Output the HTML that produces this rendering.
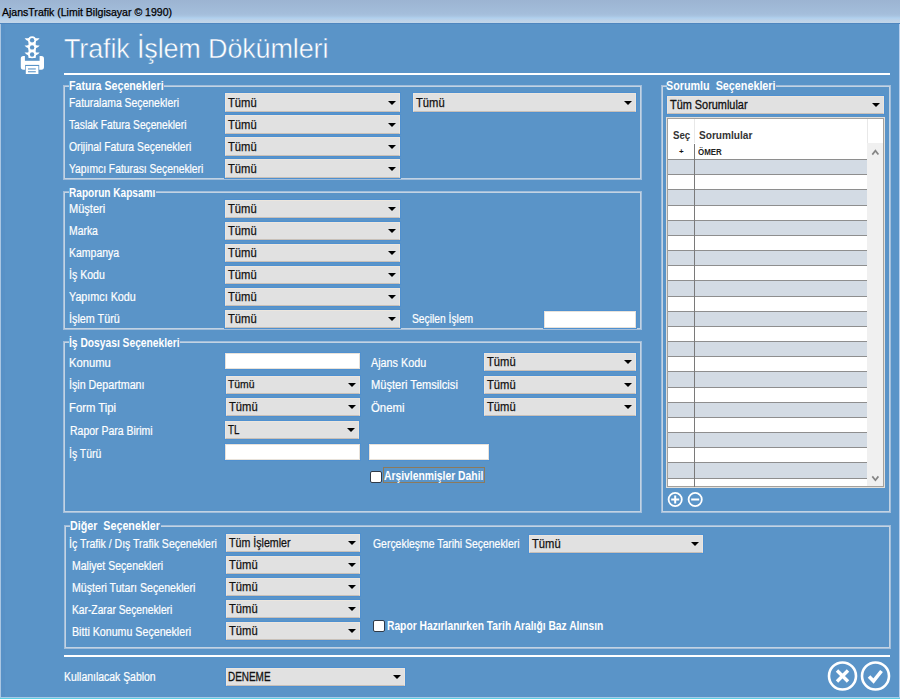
<!DOCTYPE html>
<html><head><meta charset="utf-8"><style>
html,body{margin:0;padding:0;}
body{width:900px;height:699px;position:relative;overflow:hidden;background:#5a94c8;font-family:"Liberation Sans",sans-serif;}
body>div,body>span{position:absolute;}
.t{white-space:nowrap;transform-origin:0 0;line-height:1;}
.gb{border:1px solid #a2bedb;box-shadow:inset 0 0 0 1px #c3d3e3;}
.dd{background:#e1e1e1;border:1px solid #ece6de;border-bottom-color:#c8c0b8;box-shadow:0 0 0 1px #4f90d0;}
.in{background:#fff;border:1px solid #e8e2da;box-shadow:0 0 0 1px #4f90d0;}
.cb{background:#fff;border:1px solid #2f3a48;border-radius:2px;}
.ar{width:0;height:0;border-left:4px solid transparent;border-right:4px solid transparent;border-top:4.5px solid #000;}
</style></head><body>
<div style="left:0;top:0;width:900px;height:23px;background:linear-gradient(#9cb4d2 0px,#a4bedb 14px,#a9c4e0 16px,#b0d0ee 18px,#bcd2e8 20px,#c3d6e9 23px)"></div>
<div style="left:0;top:23px;width:900px;height:1px;background:#4f86bf"></div>
<span class="t" style="left:2px;top:7.49px;font-size:11px;font-weight:400;color:#000;transform:scaleX(0.957);-webkit-text-stroke:0.25px #000;">AjansTrafik (Limit Bilgisayar © 1990)</span>
<div style="left:0;top:24px;width:1px;height:675px;background:#aac6e2"></div>
<div style="left:1px;top:24px;width:4px;height:675px;background:#5891c6"></div>
<div style="left:899px;top:24px;width:1px;height:675px;background:#b8d0ee"></div>
<div style="left:0;top:697px;width:900px;height:1px;background:#a8cce8"></div>
<div style="left:0;top:698px;width:900px;height:1px;background:#5fd0e4"></div>
<svg style="position:absolute;left:0;top:0" width="60" height="80" viewBox="0 0 60 80">
<g fill="#fff">
<rect x="20.8" y="56.1" width="23.2" height="13.6" rx="2.6"/>
</g>
<rect x="24.9" y="56" width="14.7" height="4.8" fill="#5a94c8"/>
<g fill="#fff">
<circle cx="32.1" cy="40.2" r="3.9"/><circle cx="32.1" cy="47.4" r="3.9"/><circle cx="32.1" cy="54.3" r="3.9"/>
<rect x="28.5" y="39" width="7.2" height="19"/>
<path d="M29 37.9 Q26.5 38.6 24.6 38.0 Q25.6 40.6 29 41.4 Z"/><path d="M35.2 37.9 Q37.7 38.6 39.6 38.0 Q38.6 40.6 35.2 41.4 Z"/><path d="M29 45.1 Q26.5 45.8 24.6 45.2 Q25.6 47.8 29 48.6 Z"/><path d="M35.2 45.1 Q37.7 45.8 39.6 45.2 Q38.6 47.8 35.2 48.6 Z"/><path d="M29 52.2 Q26.5 52.9 24.6 52.3 Q25.6 54.9 29 55.7 Z"/><path d="M35.2 52.2 Q37.7 52.9 39.6 52.3 Q38.6 54.9 35.2 55.7 Z"/>
</g>
<g fill="#5a94c8"><circle cx="32.1" cy="40.2" r="2.2"/><circle cx="32.1" cy="47.4" r="2.2"/><circle cx="32.1" cy="54.5" r="2.2"/>
<rect x="25.1" y="64.9" width="14.1" height="5.5"/></g>
<rect x="25.8" y="66" width="12.6" height="8" fill="#fff"/>
<g fill="#5a94c8"><rect x="28" y="68.4" width="7.8" height="1.1"/><rect x="28" y="71.2" width="7.8" height="1.1"/></g>
</svg>
<span class="t" style="left:64px;top:36px;font-size:27px;color:#fff;letter-spacing:-0.15px;-webkit-text-stroke:0.45px #5a94c8">Trafik İşlem Dökümleri</span>
<div style="left:64px;top:73px;width:826px;height:2px;background:#fff"></div>
<div style="left:64px;top:655px;width:826px;height:2px;background:#fff"></div>
<div class="gb" style="left:63px;top:85px;width:577px;height:93px"></div>
<div style="left:68.5px;top:83px;width:95px;height:6px;background:#5a94c8"></div>
<span class="t" style="left:68.91px;top:80.34px;font-size:12px;font-weight:700;color:#fff;transform:scaleX(0.8867);">Fatura Seçenekleri</span>
<div class="gb" style="left:63px;top:191px;width:577px;height:137px"></div>
<div style="left:68.5px;top:189px;width:87px;height:6px;background:#5a94c8"></div>
<span class="t" style="left:68.96px;top:186.84px;font-size:12px;font-weight:700;color:#fff;transform:scaleX(0.8406);">Raporun Kapsamı</span>
<div class="gb" style="left:63px;top:341px;width:577px;height:170px"></div>
<div style="left:68.5px;top:339px;width:111px;height:6px;background:#5a94c8"></div>
<span class="t" style="left:68.95px;top:336.84px;font-size:12px;font-weight:700;color:#fff;transform:scaleX(0.8547);">İş Dosyası Seçenekleri</span>
<div class="gb" style="left:661px;top:85px;width:228px;height:426px"></div>
<div style="left:666.5px;top:83px;width:109px;height:6px;background:#5a94c8"></div>
<span class="t" style="left:666.3px;top:80.34px;font-size:12px;font-weight:700;color:#fff;transform:scaleX(0.8975);">Sorumlu&nbsp; Seçenekleri</span>
<div class="gb" style="left:64px;top:525px;width:825px;height:122px"></div>
<div style="left:69.5px;top:523px;width:91px;height:6px;background:#5a94c8"></div>
<span class="t" style="left:69.51px;top:520.04px;font-size:12px;font-weight:700;color:#fff;transform:scaleX(0.893);">Diğer&nbsp; Seçenekler</span>
<span class="t" style="left:69.13px;top:96.64px;font-size:12px;font-weight:400;color:#fff;transform:scaleX(0.868);-webkit-text-stroke:0.2px #fff;">Faturalama Seçenekleri</span>
<div class="dd" style="left:225px;top:93px;width:173px;height:17px"></div>
<span class="t" style="left:227.8px;top:96.64px;font-size:12px;font-weight:400;color:#111;transform:scaleX(0.9333);-webkit-text-stroke:0.25px #111;">Tümü</span>
<div class="ar" style="left:388px;top:100.5px"></div>
<span class="t" style="left:69.15px;top:118.64px;font-size:12px;font-weight:400;color:#fff;transform:scaleX(0.8504);-webkit-text-stroke:0.2px #fff;">Taslak Fatura Seçenekleri</span>
<div class="dd" style="left:225px;top:115px;width:173px;height:17px"></div>
<span class="t" style="left:227.8px;top:118.64px;font-size:12px;font-weight:400;color:#111;transform:scaleX(0.9333);-webkit-text-stroke:0.25px #111;">Tümü</span>
<div class="ar" style="left:388px;top:122.5px"></div>
<span class="t" style="left:69.14px;top:140.64px;font-size:12px;font-weight:400;color:#fff;transform:scaleX(0.8643);-webkit-text-stroke:0.2px #fff;">Orijinal Fatura Seçenekleri</span>
<div class="dd" style="left:225px;top:137px;width:173px;height:17px"></div>
<span class="t" style="left:227.8px;top:140.64px;font-size:12px;font-weight:400;color:#111;transform:scaleX(0.9333);-webkit-text-stroke:0.25px #111;">Tümü</span>
<div class="ar" style="left:388px;top:144.5px"></div>
<span class="t" style="left:69.14px;top:162.64px;font-size:12px;font-weight:400;color:#fff;transform:scaleX(0.8581);-webkit-text-stroke:0.2px #fff;">Yapımcı Faturası Seçenekleri</span>
<div class="dd" style="left:225px;top:159px;width:173px;height:17px"></div>
<span class="t" style="left:227.8px;top:162.64px;font-size:12px;font-weight:400;color:#111;transform:scaleX(0.9333);-webkit-text-stroke:0.25px #111;">Tümü</span>
<div class="ar" style="left:388px;top:166.5px"></div>
<div class="dd" style="left:413px;top:93px;width:221px;height:17px"></div>
<span class="t" style="left:415.8px;top:96.64px;font-size:12px;font-weight:400;color:#111;transform:scaleX(0.9333);-webkit-text-stroke:0.25px #111;">Tümü</span>
<div class="ar" style="left:624px;top:100.5px"></div>
<span class="t" style="left:68.78px;top:202.94px;font-size:12px;font-weight:400;color:#fff;transform:scaleX(0.9184);-webkit-text-stroke:0.2px #fff;">Müşteri</span>
<div class="dd" style="left:225px;top:200px;width:173px;height:16px"></div>
<span class="t" style="left:227.8px;top:203.14px;font-size:12px;font-weight:400;color:#111;transform:scaleX(0.9333);-webkit-text-stroke:0.25px #111;">Tümü</span>
<div class="ar" style="left:388px;top:207.0px"></div>
<span class="t" style="left:68.83px;top:224.94px;font-size:12px;font-weight:400;color:#fff;transform:scaleX(0.8667);-webkit-text-stroke:0.2px #fff;">Marka</span>
<div class="dd" style="left:225px;top:222px;width:173px;height:16px"></div>
<span class="t" style="left:227.8px;top:225.14px;font-size:12px;font-weight:400;color:#111;transform:scaleX(0.9333);-webkit-text-stroke:0.25px #111;">Tümü</span>
<div class="ar" style="left:388px;top:229.0px"></div>
<span class="t" style="left:68.83px;top:246.94px;font-size:12px;font-weight:400;color:#fff;transform:scaleX(0.8737);-webkit-text-stroke:0.2px #fff;">Kampanya</span>
<div class="dd" style="left:225px;top:244px;width:173px;height:16px"></div>
<span class="t" style="left:227.8px;top:247.14px;font-size:12px;font-weight:400;color:#111;transform:scaleX(0.9333);-webkit-text-stroke:0.25px #111;">Tümü</span>
<div class="ar" style="left:388px;top:251.0px"></div>
<span class="t" style="left:68.82px;top:268.94px;font-size:12px;font-weight:400;color:#fff;transform:scaleX(0.8795);-webkit-text-stroke:0.2px #fff;">İş Kodu</span>
<div class="dd" style="left:225px;top:266px;width:173px;height:16px"></div>
<span class="t" style="left:227.8px;top:269.14px;font-size:12px;font-weight:400;color:#111;transform:scaleX(0.9333);-webkit-text-stroke:0.25px #111;">Tümü</span>
<div class="ar" style="left:388px;top:273.0px"></div>
<span class="t" style="left:68.7px;top:290.94px;font-size:12px;font-weight:400;color:#fff;transform:scaleX(0.8973);-webkit-text-stroke:0.2px #fff;">Yapımcı Kodu</span>
<div class="dd" style="left:225px;top:288px;width:173px;height:16px"></div>
<span class="t" style="left:227.8px;top:291.14px;font-size:12px;font-weight:400;color:#111;transform:scaleX(0.9333);-webkit-text-stroke:0.25px #111;">Tümü</span>
<div class="ar" style="left:388px;top:295.0px"></div>
<span class="t" style="left:68.7px;top:312.94px;font-size:12px;font-weight:400;color:#fff;transform:scaleX(0.8982);-webkit-text-stroke:0.2px #fff;">İşlem Türü</span>
<div class="dd" style="left:225px;top:310px;width:173px;height:16px"></div>
<span class="t" style="left:227.8px;top:313.14px;font-size:12px;font-weight:400;color:#111;transform:scaleX(0.9333);-webkit-text-stroke:0.25px #111;">Tümü</span>
<div class="ar" style="left:388px;top:317.0px"></div>
<span class="t" style="left:411.84px;top:313.34px;font-size:12px;font-weight:400;color:#fff;transform:scaleX(0.8571);-webkit-text-stroke:0.2px #fff;">Seçilen İşlem</span>
<div class="in" style="left:544px;top:311px;width:90px;height:15px"></div>
<span class="t" style="left:68.87px;top:357.04px;font-size:12px;font-weight:400;color:#fff;transform:scaleX(0.9349);-webkit-text-stroke:0.2px #fff;">Konumu</span>
<div class="in" style="left:225px;top:353px;width:133px;height:14px"></div>
<span class="t" style="left:68.91px;top:379.34px;font-size:12px;font-weight:400;color:#fff;transform:scaleX(0.8916);-webkit-text-stroke:0.2px #fff;">İşin Departmanı</span>
<div class="dd" style="left:226px;top:376px;width:132px;height:16px"></div>
<span class="t" style="left:228.2px;top:379.41px;font-size:10.5px;font-weight:400;color:#111;transform:scaleX(0.9885);-webkit-text-stroke:0.25px #111;">Tümü</span>
<div class="ar" style="left:348px;top:383.0px"></div>
<span class="t" style="left:68.86px;top:402.34px;font-size:12px;font-weight:400;color:#fff;transform:scaleX(0.9417);-webkit-text-stroke:0.2px #fff;">Form Tipi</span>
<div class="dd" style="left:226px;top:398px;width:132px;height:16px"></div>
<span class="t" style="left:228.8px;top:401.14px;font-size:12px;font-weight:400;color:#111;transform:scaleX(0.9333);-webkit-text-stroke:0.25px #111;">Tümü</span>
<div class="ar" style="left:348px;top:405.0px"></div>
<span class="t" style="left:70.03px;top:425.34px;font-size:12px;font-weight:400;color:#fff;transform:scaleX(0.872);-webkit-text-stroke:0.2px #fff;">Rapor Para Birimi</span>
<div class="dd" style="left:225px;top:421px;width:132px;height:16px"></div>
<span class="t" style="left:227.8px;top:424.14px;font-size:12px;font-weight:400;color:#111;transform:scaleX(0.8143);-webkit-text-stroke:0.25px #111;">TL</span>
<div class="ar" style="left:347px;top:428.0px"></div>
<span class="t" style="left:68.93px;top:448.34px;font-size:12px;font-weight:400;color:#fff;transform:scaleX(0.8667);-webkit-text-stroke:0.2px #fff;">İş Türü</span>
<div class="in" style="left:225px;top:444px;width:133px;height:14px"></div>
<div class="in" style="left:369px;top:444px;width:118px;height:14px"></div>
<span class="t" style="left:371.2px;top:357.04px;font-size:12px;font-weight:400;color:#fff;transform:scaleX(0.8983);-webkit-text-stroke:0.2px #fff;">Ajans Kodu</span>
<div class="dd" style="left:484px;top:353px;width:150px;height:16px"></div>
<span class="t" style="left:486.8px;top:356.14px;font-size:12px;font-weight:400;color:#111;transform:scaleX(0.9333);-webkit-text-stroke:0.25px #111;">Tümü</span>
<div class="ar" style="left:624px;top:360.0px"></div>
<span class="t" style="left:371.17px;top:379.34px;font-size:12px;font-weight:400;color:#fff;transform:scaleX(0.9261);-webkit-text-stroke:0.2px #fff;">Müşteri Temsilcisi</span>
<div class="dd" style="left:484px;top:376px;width:150px;height:16px"></div>
<span class="t" style="left:486.8px;top:379.14px;font-size:12px;font-weight:400;color:#111;transform:scaleX(0.9333);-webkit-text-stroke:0.25px #111;">Tümü</span>
<div class="ar" style="left:624px;top:383.0px"></div>
<span class="t" style="left:371.15px;top:402.34px;font-size:12px;font-weight:400;color:#fff;transform:scaleX(0.9471);-webkit-text-stroke:0.2px #fff;">Önemi</span>
<div class="dd" style="left:484px;top:398px;width:150px;height:16px"></div>
<span class="t" style="left:486.8px;top:401.14px;font-size:12px;font-weight:400;color:#111;transform:scaleX(0.9333);-webkit-text-stroke:0.25px #111;">Tümü</span>
<div class="ar" style="left:624px;top:405.0px"></div>
<div class="cb" style="left:370px;top:471px;width:10px;height:10px"></div>
<div style="left:383px;top:467px;width:100px;height:14px;border:1px solid #8c7a5c"></div>
<span class="t" style="left:384.44px;top:469.84px;font-size:12px;font-weight:700;color:#fff;transform:scaleX(0.8614);">Arşivlenmişler Dahil</span>
<div class="dd" style="left:667px;top:96px;width:215px;height:16px"></div>
<span class="t" style="left:669.8px;top:99.14px;font-size:12px;font-weight:400;color:#111;transform:scaleX(0.9082);-webkit-text-stroke:0.3px #111;">Tüm Sorumlular</span>
<div class="ar" style="left:872px;top:103.0px"></div>
<div style="left:666px;top:117px;width:219px;height:371px;background:#fff;border:1px solid #e2e0dc;box-shadow:inset 0 0 0 1px #a4a19d;box-sizing:border-box"></div>
<div style="left:867px;top:143px;width:16px;height:343px;background:#f0f0f0"></div>
<svg style="position:absolute;left:869px;top:147px" width="12" height="10"><path d="M3.3 7.6 L6.4 3.7 L9.4 7.6" stroke="#858585" stroke-width="1.7" fill="none"/></svg>
<svg style="position:absolute;left:869px;top:473px" width="12" height="10"><path d="M3.3 3.4 L6.4 7.2 L9.4 3.4" stroke="#858585" stroke-width="1.7" fill="none"/></svg>
<div style="left:694px;top:119px;width:1px;height:24px;background:#e8e8e8"></div>
<div style="left:867px;top:119px;width:1px;height:24px;background:#e8e8e8"></div>
<span class="t" style="left:673px;top:129.89px;font-size:11px;font-weight:700;color:#333;transform:scaleX(0.88);">Seç</span>
<span class="t" style="left:698.5px;top:129.89px;font-size:11px;font-weight:700;color:#333;transform:scaleX(0.92);">Sorumlular</span>
<div style="left:668px;top:160px;width:199px;height:14px;background:#d3dbe4"></div>
<div style="left:668px;top:190px;width:199px;height:15px;background:#d3dbe4"></div>
<div style="left:668px;top:221px;width:199px;height:14px;background:#d3dbe4"></div>
<div style="left:668px;top:251px;width:199px;height:14px;background:#d3dbe4"></div>
<div style="left:668px;top:281px;width:199px;height:15px;background:#d3dbe4"></div>
<div style="left:668px;top:312px;width:199px;height:14px;background:#d3dbe4"></div>
<div style="left:668px;top:342px;width:199px;height:14px;background:#d3dbe4"></div>
<div style="left:668px;top:372px;width:199px;height:15px;background:#d3dbe4"></div>
<div style="left:668px;top:403px;width:199px;height:14px;background:#d3dbe4"></div>
<div style="left:668px;top:433px;width:199px;height:14px;background:#d3dbe4"></div>
<div style="left:668px;top:463px;width:199px;height:15px;background:#d3dbe4"></div>
<div style="left:668px;top:159px;width:199px;height:1px;background:#8e8e8e"></div>
<div style="left:668px;top:174px;width:199px;height:1px;background:#8e8e8e"></div>
<div style="left:668px;top:189px;width:199px;height:1px;background:#8e8e8e"></div>
<div style="left:668px;top:205px;width:199px;height:1px;background:#8e8e8e"></div>
<div style="left:668px;top:220px;width:199px;height:1px;background:#8e8e8e"></div>
<div style="left:668px;top:235px;width:199px;height:1px;background:#8e8e8e"></div>
<div style="left:668px;top:250px;width:199px;height:1px;background:#8e8e8e"></div>
<div style="left:668px;top:265px;width:199px;height:1px;background:#8e8e8e"></div>
<div style="left:668px;top:280px;width:199px;height:1px;background:#8e8e8e"></div>
<div style="left:668px;top:296px;width:199px;height:1px;background:#8e8e8e"></div>
<div style="left:668px;top:311px;width:199px;height:1px;background:#8e8e8e"></div>
<div style="left:668px;top:326px;width:199px;height:1px;background:#8e8e8e"></div>
<div style="left:668px;top:341px;width:199px;height:1px;background:#8e8e8e"></div>
<div style="left:668px;top:356px;width:199px;height:1px;background:#8e8e8e"></div>
<div style="left:668px;top:371px;width:199px;height:1px;background:#8e8e8e"></div>
<div style="left:668px;top:387px;width:199px;height:1px;background:#8e8e8e"></div>
<div style="left:668px;top:402px;width:199px;height:1px;background:#8e8e8e"></div>
<div style="left:668px;top:417px;width:199px;height:1px;background:#8e8e8e"></div>
<div style="left:668px;top:432px;width:199px;height:1px;background:#8e8e8e"></div>
<div style="left:668px;top:447px;width:199px;height:1px;background:#8e8e8e"></div>
<div style="left:668px;top:462px;width:199px;height:1px;background:#8e8e8e"></div>
<div style="left:668px;top:478px;width:199px;height:1px;background:#8e8e8e"></div>
<div style="left:694px;top:144px;width:1px;height:343px;background:#7a7a7a"></div>
<span class="t" style="left:679px;top:148.23px;font-size:8px;font-weight:700;color:#111;transform:scaleX(1);">+</span>
<span class="t" style="left:698px;top:147.68px;font-size:9px;font-weight:700;color:#222;transform:scaleX(0.88);">ÖMER</span>
<svg style="position:absolute;left:666px;top:490px" width="40" height="20" viewBox="0 0 40 20">
<g stroke="#fff" stroke-width="1.8" fill="none"><circle cx="9.2" cy="9.5" r="6.6"/><circle cx="29.2" cy="9.5" r="6.6"/>
<path d="M9.2 5.5 v8 M5.2 9.5 h8 M25.2 9.5 h8" stroke-width="2"/></g></svg>
<span class="t" style="left:69.32px;top:538.04px;font-size:12px;font-weight:400;color:#fff;transform:scaleX(0.876);-webkit-text-stroke:0.2px #fff;">İç Trafik / Dış Trafik Seçenekleri</span>
<div class="dd" style="left:226px;top:534px;width:132px;height:16px"></div>
<span class="t" style="left:228.8px;top:537.14px;font-size:12px;font-weight:400;color:#111;transform:scaleX(0.8884);-webkit-text-stroke:0.25px #111;">Tüm İşlemler</span>
<div class="ar" style="left:348px;top:541.0px"></div>
<span class="t" style="left:71.62px;top:560.04px;font-size:12px;font-weight:400;color:#fff;transform:scaleX(0.8757);-webkit-text-stroke:0.2px #fff;">Maliyet Seçenekleri</span>
<div class="dd" style="left:226px;top:556px;width:132px;height:16px"></div>
<span class="t" style="left:228.8px;top:559.14px;font-size:12px;font-weight:400;color:#111;transform:scaleX(0.9333);-webkit-text-stroke:0.25px #111;">Tümü</span>
<div class="ar" style="left:348px;top:563.0px"></div>
<span class="t" style="left:71.61px;top:582.04px;font-size:12px;font-weight:400;color:#fff;transform:scaleX(0.8855);-webkit-text-stroke:0.2px #fff;">Müşteri Tutarı Seçenekleri</span>
<div class="dd" style="left:226px;top:578px;width:132px;height:16px"></div>
<span class="t" style="left:228.8px;top:581.14px;font-size:12px;font-weight:400;color:#111;transform:scaleX(0.9333);-webkit-text-stroke:0.25px #111;">Tümü</span>
<div class="ar" style="left:348px;top:585.0px"></div>
<span class="t" style="left:71.65px;top:604.04px;font-size:12px;font-weight:400;color:#fff;transform:scaleX(0.8543);-webkit-text-stroke:0.2px #fff;">Kar-Zarar Seçenekleri</span>
<div class="dd" style="left:226px;top:600px;width:132px;height:16px"></div>
<span class="t" style="left:228.8px;top:603.14px;font-size:12px;font-weight:400;color:#111;transform:scaleX(0.9333);-webkit-text-stroke:0.25px #111;">Tümü</span>
<div class="ar" style="left:348px;top:607.0px"></div>
<span class="t" style="left:71.61px;top:626.04px;font-size:12px;font-weight:400;color:#fff;transform:scaleX(0.888);-webkit-text-stroke:0.2px #fff;">Bitti Konumu Seçenekleri</span>
<div class="dd" style="left:226px;top:622px;width:132px;height:16px"></div>
<span class="t" style="left:228.8px;top:625.14px;font-size:12px;font-weight:400;color:#111;transform:scaleX(0.9333);-webkit-text-stroke:0.25px #111;">Tümü</span>
<div class="ar" style="left:348px;top:629.0px"></div>
<span class="t" style="left:372.53px;top:538.34px;font-size:12px;font-weight:400;color:#fff;transform:scaleX(0.8695);-webkit-text-stroke:0.2px #fff;">Gerçekleşme Tarihi Seçenekleri</span>
<div class="dd" style="left:529px;top:535px;width:172px;height:16px"></div>
<span class="t" style="left:531.8px;top:538.14px;font-size:12px;font-weight:400;color:#111;transform:scaleX(0.9333);-webkit-text-stroke:0.25px #111;">Tümü</span>
<div class="ar" style="left:691px;top:542.0px"></div>
<div class="cb" style="left:373px;top:620px;width:10px;height:10px"></div>
<span class="t" style="left:387.14px;top:619.84px;font-size:12px;font-weight:700;color:#fff;transform:scaleX(0.8554);">Rapor Hazırlanırken Tarih Aralığı Baz Alınsın</span>
<span class="t" style="left:63.53px;top:671.34px;font-size:12px;font-weight:400;color:#fff;transform:scaleX(0.8692);-webkit-text-stroke:0.2px #fff;">Kullanılacak Şablon</span>
<div class="dd" style="left:226px;top:668px;width:177px;height:16px"></div>
<span class="t" style="left:227.97px;top:671.14px;font-size:12px;font-weight:400;color:#111;transform:scaleX(0.828);-webkit-text-stroke:0.3px #111;">DENEME</span>
<div class="ar" style="left:393px;top:675.0px"></div>
<svg style="position:absolute;left:825px;top:659px" width="70" height="36" viewBox="0 0 70 36">
<g stroke="#fff" fill="none"><circle cx="17.5" cy="17" r="13.5" stroke-width="2.6"/><circle cx="50.5" cy="17" r="13.5" stroke-width="2.6"/>
<path d="M12 11.5 L23 22.5 M23 11.5 L12 22.5" stroke-width="3.4"/>
<path d="M44 17.5 L48.5 22 L56.5 12" stroke-width="3.6"/></g></svg>
</body></html>
